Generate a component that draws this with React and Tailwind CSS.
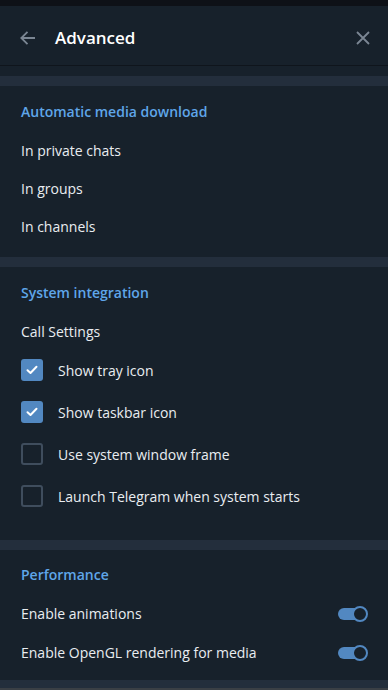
import { useState } from "react";

const Check = () => (
    <svg width="12" height="10" viewBox="0 0 12 10" fill="none">
        <path d="M1.5 5.2 L4.5 8 L10.5 1.8" stroke="white" strokeWidth="2" strokeLinecap="round" strokeLinejoin="round" />
    </svg>
);

const CheckRow = ({ label, checked, onToggle }) => (
    <button onClick={onToggle} className="flex items-center h-[42px] px-[21px] w-full text-left">
        {checked ? (
            <span className="w-[22px] h-[22px] rounded-[3px] bg-[#5288c1] flex items-center justify-center">
                <Check />
            </span>
        ) : (
            <span className="w-[22px] h-[22px] rounded-[3px] border-2 border-[#3f4d5d]" />
        )}
        <span className="ml-[15px] text-[14px] text-[#e9edf1]">{label}</span>
    </button>
);

const Toggle = ({ label, on, onToggle }) => (
    <button onClick={onToggle} className="flex items-center justify-between h-[39px] px-[21px] w-full text-left">
        <span className="text-[14px] text-[#e9edf1]">{label}</span>
        <span className="relative w-[30px] h-[16px] mr-[-1px]">
            <span className="absolute left-0 top-[2px] w-[26px] h-[12px] rounded-full bg-[#5288c1]" />
            <span className="absolute right-0 top-0 w-[16px] h-[16px] rounded-full bg-[#17212b] border-2 border-[#5288c1]" />
        </span>
    </button>
);

const Item = ({ children }) => (
    <div className="h-[38px] flex items-center px-[21px] text-[14px] text-[#e9edf1]">{children}</div>
);

const Title = ({ children }) => (
    <div className="h-[40px] flex items-center px-[21px] text-[14px] font-semibold text-[#5fa6e9]">{children}</div>
);

export default function App() {
    const [checks, setChecks] = useState([true, true, false, false]);
    const [toggles, setToggles] = useState([true, true]);

    const flip = (i) => setChecks(checks.map((c, j) => (j === i ? !c : c)));

    return (
        <div className="w-[388px] h-[690px] overflow-hidden bg-[#17212b] flex flex-col" style={{ fontFamily: '"Open Sans", sans-serif' }}>
            <div className="h-[6px] bg-[#0e1117]" />

            {/* Header */}
            <div className="h-[60px] pt-[4px] flex items-center border-b border-[#0f151c]">
                <svg className="ml-[18px]" width="20" height="20" viewBox="0 0 20 20" fill="none">
                    <path d="M17 10 H3.5 M9.5 3.8 L3.3 10 L9.5 16.2" stroke="#7b8693" strokeWidth="1.8" />
                </svg>
                <span className="ml-[17px] text-[17px] font-semibold text-white">Advanced</span>
                <svg className="ml-auto mr-[17px]" width="16" height="16" viewBox="0 0 16 16" fill="none">
                    <path d="M2 2 L14 14 M14 2 L2 14" stroke="#7b8693" strokeWidth="1.8" />
                </svg>
            </div>

            <div className="h-[10px]" />
            <div className="h-[10px] bg-[#232e3c]" />

            {/* Automatic media download */}
            <div className="pt-[5px] pb-[12px]">
                <Title>Automatic media download</Title>
                <Item>In private chats</Item>
                <Item>In groups</Item>
                <Item>In channels</Item>
            </div>

            <div className="h-[10px] bg-[#232e3c]" />

            {/* System integration */}
            <div className="pt-[5px] pb-[23px]">
                <Title>System integration</Title>
                <Item>Call Settings</Item>
                <div className="mt-[-1px]">
                    <CheckRow label="Show tray icon" checked={checks[0]} onToggle={() => flip(0)} />
                    <CheckRow label="Show taskbar icon" checked={checks[1]} onToggle={() => flip(1)} />
                    <CheckRow label="Use system window frame" checked={checks[2]} onToggle={() => flip(2)} />
                    <CheckRow label="Launch Telegram when system starts" checked={checks[3]} onToggle={() => flip(3)} />
                </div>
            </div>

            <div className="h-[10px] bg-[#232e3c]" />

            {/* Performance */}
            <div className="pt-[5px] pb-[8px]">
                <div className="h-[39px] pb-[1px] flex items-center px-[21px] text-[14px] font-semibold text-[#5fa6e9]">Performance</div>
                <Toggle label="Enable animations" on={toggles[0]} onToggle={() => setToggles([!toggles[0], toggles[1]])} />
                <Toggle label="Enable OpenGL rendering for media" on={toggles[1]} onToggle={() => setToggles([toggles[0], !toggles[1]])} />
            </div>

            <div className="h-[8px] bg-[#232e3c]" />
            <div className="flex-1 bg-[#3a3f45]" />
        </div>
    );
}
